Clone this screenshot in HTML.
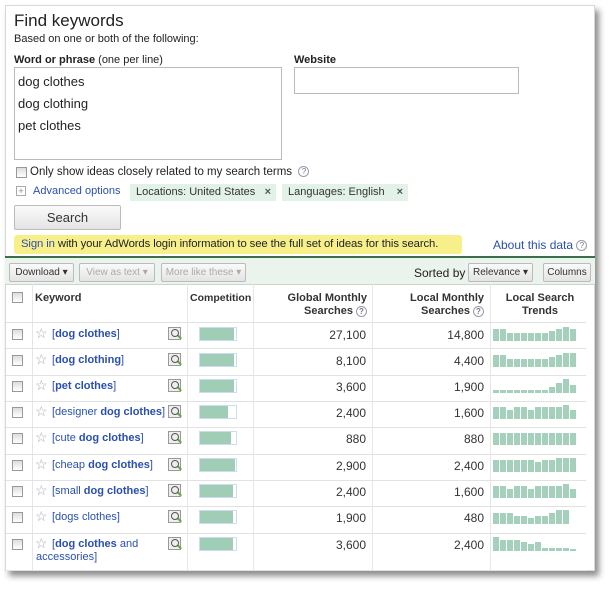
<!DOCTYPE html><html><head><style>
*{box-sizing:border-box;margin:0;padding:0}
body{width:616px;height:589px;background:#fff;font-family:"Liberation Sans",Arial,sans-serif;font-size:12px;color:#222;position:relative;overflow:hidden}
.card{position:absolute;left:5px;top:5px;width:590px;height:566px;background:#fff;border:1px solid #d8d8d8;box-shadow:4px 5px 6px rgba(0,0,0,.45)}
.a{position:absolute;white-space:nowrap}
a,.lk{color:#2a4fb0;text-decoration:none}
.box{position:absolute;border:1px solid #bbb;background:#fff}
.cb{position:absolute;width:11px;height:11px;border:1px solid #999;background:linear-gradient(#ddd,#fff)}
.tag{position:absolute;background:#e2f2e8;height:17px;line-height:17px;padding-left:6px;color:#333;font-size:11px}
.btn{position:absolute;border:1px solid #bbb;background:linear-gradient(#fafafa,#e4e4e4);border-radius:2px;font-size:11px;text-align:center;color:#333}
.row{position:absolute;left:4px;width:582px;border-bottom:1px solid #e2e2e2}
.vl{position:absolute;width:1px;background:#e6e6e6;top:284px;height:286px}
.bar{position:absolute;width:38px;height:14px;border:1px solid #cde;background:#fff}
.bar i{display:block;height:12px;background:#9fcdb5}
.tr{position:absolute;left:493px;height:14px;display:flex;align-items:flex-end;gap:1px}
.tr i{width:6px;background:#a5d0bb}
.num{position:absolute;text-align:right;width:80px;color:#333}
.mag{position:absolute;width:13px;height:13px;border:1px solid #999;background:#eee}
.mag:after{content:"";position:absolute;left:2px;top:1px;width:6px;height:6px;border:1.5px solid #555;border-radius:50%}
.mag:before{content:"";position:absolute;left:8px;top:8px;width:5px;height:2px;background:#6a4;transform:rotate(45deg)}
.star{position:absolute;color:#aab;font-size:14px}
.q{display:inline-block;width:11px;height:11px;border:1px solid #99a;border-radius:50%;font-size:8px;line-height:9px;text-align:center;color:#778;vertical-align:middle}
</style></head><body>
<div class="card"></div>
<div class="a" style="left:14px;top:11px;font-size:17px">Find keywords</div>
<div class="a" style="left:14px;top:33px;font-size:11px">Based on one or both of the following:</div>
<div class="a" style="left:14px;top:54px;font-size:11px"><b>Word or phrase</b> (one per line)</div>
<div class="box" style="left:14px;top:67px;width:268px;height:93px"></div>
<div class="a" style="left:18px;top:74px;font-size:13px">dog clothes</div>
<div class="a" style="left:18px;top:96px;font-size:13px">dog clothing</div>
<div class="a" style="left:18px;top:118px;font-size:13px">pet clothes</div>
<div class="a" style="left:294px;top:54px;font-size:11px"><b>Website</b></div>
<div class="box" style="left:294px;top:67px;width:225px;height:27px"></div>
<div class="cb" style="left:16px;top:167px"></div>
<div class="a" style="left:30px;top:166px;font-size:11.5px">Only show ideas closely related to my search terms &nbsp;<span class="q">?</span></div>
<div class="a" style="left:16px;top:186px;width:10px;height:10px;border:1px solid #aaa;font-size:9px;line-height:8px;text-align:center;color:#888">+</div>
<div class="a lk" style="left:33px;top:185px;font-size:11px">Advanced options</div>
<div class="tag" style="left:130px;top:184px;width:146px">Locations: United States <span style="position:absolute;right:5px;font-weight:bold;color:#555">×</span></div>
<div class="tag" style="left:282px;top:184px;width:126px">Languages: English <span style="position:absolute;right:5px;font-weight:bold;color:#555">×</span></div>
<div class="btn" style="left:14px;top:205px;width:107px;height:25px;line-height:24px;font-size:13px">Search</div>
<div class="a" style="left:14px;top:235px;width:448px;height:19px;line-height:19px;background:#f7f08a;border-radius:3px;padding-left:7px;font-size:11.3px;letter-spacing:-0.1px"><span class="lk">Sign in</span> with your AdWords login information to see the full set of ideas for this search.</div>
<div class="a lk" style="left:493px;top:238px;font-size:12px">About this data <span class="q">?</span></div>
<div class="a" style="left:5px;top:256px;width:590px;height:2px;background:#3c6e4e"></div>
<div class="a" style="left:5px;top:258px;width:590px;height:27px;background:#eaf3ec;border-bottom:1px solid #c9d6cc"></div>
<div class="btn" style="left:9px;top:263px;width:65px;height:19px;line-height:17px;font-size:10px">Download ▾</div>
<div class="btn" style="left:79px;top:263px;width:76px;height:19px;line-height:17px;font-size:10px;color:#aaa">View as text ▾</div>
<div class="btn" style="left:161px;top:263px;width:85px;height:19px;line-height:17px;font-size:10px;color:#aaa">More like these ▾</div>
<div class="a" style="left:414px;top:266px;font-size:12px">Sorted by</div>
<div class="btn" style="left:468px;top:263px;width:65px;height:19px;line-height:17px;font-size:10px">Relevance ▾</div>
<div class="btn" style="left:543px;top:263px;width:48px;height:19px;line-height:17px;font-size:10px">Columns</div>
<div class="vl" style="left:32px"></div><div class="vl" style="left:187px"></div><div class="vl" style="left:253px"></div><div class="vl" style="left:372px"></div><div class="vl" style="left:490px"></div>
<div class="row" style="top:285px;height:38px"></div>
<div class="cb" style="left:12px;top:292px"></div>
<div class="a" style="left:35px;top:292px;font-weight:bold;font-size:11px;color:#333">Keyword</div>
<div class="a" style="left:190px;top:292px;font-weight:bold;font-size:10.5px;color:#333">Competition</div>
<div class="a" style="left:260px;top:292px;width:107px;text-align:right;font-weight:bold;font-size:11px;color:#333;line-height:13px;white-space:normal">Global Monthly<br>Searches <span class="q">?</span></div>
<div class="a" style="left:380px;top:292px;width:104px;text-align:right;font-weight:bold;font-size:11px;color:#333;line-height:13px;white-space:normal">Local Monthly<br>Searches <span class="q">?</span></div>
<div class="a" style="left:492px;top:292px;width:96px;text-align:center;font-weight:bold;font-size:11px;color:#333;line-height:13px;white-space:normal">Local Search<br>Trends</div>

<div class="row" style="top:323px;height:26px"></div><div class="row" style="top:349px;height:27px"></div><div class="row" style="top:376px;height:26px"></div><div class="row" style="top:402px;height:26px"></div><div class="row" style="top:428px;height:27px"></div><div class="row" style="top:455px;height:26px"></div><div class="row" style="top:481px;height:26px"></div><div class="row" style="top:507px;height:27px"></div><div class="row" style="top:534px;height:37px"></div>

<div class="cb" style="left:12px;top:329px"></div><div class="star" style="left:35px;top:325px">☆</div><div class="a lk" style="left:52px;top:328px;font-size:11px">[<b>dog clothes</b>]</div><div class="mag" style="left:168px;top:327px"></div><div class="bar" style="left:199px;top:327px"><i style="width:34px"></i></div><div class="num" style="left:286px;top:328px">27,100</div><div class="num" style="left:404px;top:328px">14,800</div>
<div class="tr" style="top:327px"><i style="height:12px"></i><i style="height:12px"></i><i style="height:8px"></i><i style="height:8px"></i><i style="height:8px"></i><i style="height:8px"></i><i style="height:8px"></i><i style="height:8px"></i><i style="height:10px"></i><i style="height:12px"></i><i style="height:14px"></i><i style="height:12px"></i></div>

<div class="cb" style="left:12px;top:355px"></div><div class="star" style="left:35px;top:351px">☆</div><div class="a lk" style="left:52px;top:354px;font-size:11px">[<b>dog clothing</b>]</div><div class="mag" style="left:168px;top:353px"></div><div class="bar" style="left:199px;top:353px"><i style="width:34px"></i></div><div class="num" style="left:286px;top:354px">8,100</div><div class="num" style="left:404px;top:354px">4,400</div>
<div class="tr" style="top:353px"><i style="height:12px"></i><i style="height:12px"></i><i style="height:8px"></i><i style="height:8px"></i><i style="height:8px"></i><i style="height:8px"></i><i style="height:8px"></i><i style="height:8px"></i><i style="height:10px"></i><i style="height:12px"></i><i style="height:14px"></i><i style="height:14px"></i></div>

<div class="cb" style="left:12px;top:381px"></div><div class="star" style="left:35px;top:377px">☆</div><div class="a lk" style="left:52px;top:380px;font-size:11px">[<b>pet clothes</b>]</div><div class="mag" style="left:168px;top:379px"></div><div class="bar" style="left:199px;top:379px"><i style="width:34px"></i></div><div class="num" style="left:286px;top:380px">3,600</div><div class="num" style="left:404px;top:380px">1,900</div>
<div class="tr" style="top:379px"><i style="height:3px"></i><i style="height:3px"></i><i style="height:3px"></i><i style="height:3px"></i><i style="height:3px"></i><i style="height:3px"></i><i style="height:3px"></i><i style="height:3px"></i><i style="height:6px"></i><i style="height:10px"></i><i style="height:14px"></i><i style="height:8px"></i></div>

<div class="cb" style="left:12px;top:407px"></div><div class="star" style="left:35px;top:403px">☆</div><div class="a lk" style="left:52px;top:406px;font-size:11px">[designer <b>dog clothes</b>]</div><div class="mag" style="left:168px;top:405px"></div><div class="bar" style="left:199px;top:405px"><i style="width:28px"></i></div><div class="num" style="left:286px;top:406px">2,400</div><div class="num" style="left:404px;top:406px">1,600</div>
<div class="tr" style="top:405px"><i style="height:12px"></i><i style="height:12px"></i><i style="height:9px"></i><i style="height:12px"></i><i style="height:12px"></i><i style="height:9px"></i><i style="height:12px"></i><i style="height:12px"></i><i style="height:12px"></i><i style="height:12px"></i><i style="height:14px"></i><i style="height:9px"></i></div>

<div class="cb" style="left:12px;top:433px"></div><div class="star" style="left:35px;top:429px">☆</div><div class="a lk" style="left:52px;top:432px;font-size:11px">[cute <b>dog clothes</b>]</div><div class="mag" style="left:168px;top:431px"></div><div class="bar" style="left:199px;top:431px"><i style="width:31px"></i></div><div class="num" style="left:286px;top:432px">880</div><div class="num" style="left:404px;top:432px">880</div>
<div class="tr" style="top:431px"><i style="height:12px"></i><i style="height:12px"></i><i style="height:12px"></i><i style="height:12px"></i><i style="height:12px"></i><i style="height:12px"></i><i style="height:12px"></i><i style="height:12px"></i><i style="height:12px"></i><i style="height:12px"></i><i style="height:12px"></i><i style="height:12px"></i></div>

<div class="cb" style="left:12px;top:460px"></div><div class="star" style="left:35px;top:456px">☆</div><div class="a lk" style="left:52px;top:459px;font-size:11px">[cheap <b>dog clothes</b>]</div><div class="mag" style="left:168px;top:458px"></div><div class="bar" style="left:199px;top:458px"><i style="width:35px"></i></div><div class="num" style="left:286px;top:459px">2,900</div><div class="num" style="left:404px;top:459px">2,400</div>
<div class="tr" style="top:458px"><i style="height:12px"></i><i style="height:12px"></i><i style="height:12px"></i><i style="height:12px"></i><i style="height:12px"></i><i style="height:12px"></i><i style="height:10px"></i><i style="height:12px"></i><i style="height:12px"></i><i style="height:14px"></i><i style="height:14px"></i><i style="height:14px"></i></div>

<div class="cb" style="left:12px;top:486px"></div><div class="star" style="left:35px;top:482px">☆</div><div class="a lk" style="left:52px;top:485px;font-size:11px">[small <b>dog clothes</b>]</div><div class="mag" style="left:168px;top:484px"></div><div class="bar" style="left:199px;top:484px"><i style="width:33px"></i></div><div class="num" style="left:286px;top:485px">2,400</div><div class="num" style="left:404px;top:485px">1,600</div>
<div class="tr" style="top:484px"><i style="height:12px"></i><i style="height:12px"></i><i style="height:9px"></i><i style="height:12px"></i><i style="height:12px"></i><i style="height:9px"></i><i style="height:12px"></i><i style="height:12px"></i><i style="height:12px"></i><i style="height:12px"></i><i style="height:14px"></i><i style="height:9px"></i></div>

<div class="cb" style="left:12px;top:512px"></div><div class="star" style="left:35px;top:508px">☆</div><div class="a lk" style="left:52px;top:511px;font-size:11px">[dogs clothes]</div><div class="mag" style="left:168px;top:510px"></div><div class="bar" style="left:199px;top:510px"><i style="width:33px"></i></div><div class="num" style="left:286px;top:511px">1,900</div><div class="num" style="left:404px;top:511px">480</div>
<div class="tr" style="top:510px"><i style="height:11px"></i><i style="height:11px"></i><i style="height:11px"></i><i style="height:8px"></i><i style="height:8px"></i><i style="height:6px"></i><i style="height:8px"></i><i style="height:8px"></i><i style="height:11px"></i><i style="height:14px"></i><i style="height:14px"></i><i style="height:0"></i></div>

<div class="cb" style="left:12px;top:539px"></div><div class="star" style="left:35px;top:535px">☆</div><div class="a lk" style="left:52px;top:538px;font-size:11px">[<b>dog clothes</b> and</div><div class="a lk" style="left:36px;top:551px;font-size:11px">accessories]</div><div class="mag" style="left:168px;top:537px"></div><div class="bar" style="left:199px;top:537px"><i style="width:33px"></i></div><div class="num" style="left:286px;top:538px">3,600</div><div class="num" style="left:404px;top:538px">2,400</div>
<div class="tr" style="top:537px"><i style="height:14px"></i><i style="height:11px"></i><i style="height:11px"></i><i style="height:11px"></i><i style="height:9px"></i><i style="height:7px"></i><i style="height:9px"></i><i style="height:3px"></i><i style="height:3px"></i><i style="height:3px"></i><i style="height:3px"></i><i style="height:2px"></i></div>
</body></html>
